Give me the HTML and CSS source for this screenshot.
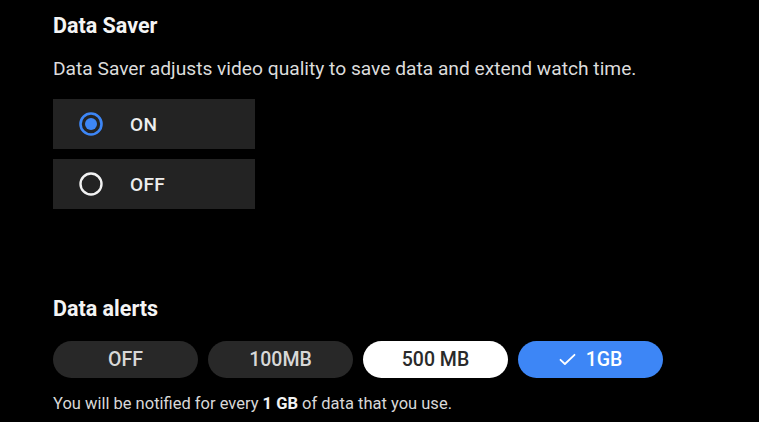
FILE: index.html
```html
<!DOCTYPE html>
<html lang="en">
<head>
<meta charset="utf-8">
<title>Data Saver</title>
<link rel="stylesheet" href="styles.css">
</head>
<body>
<main class="page">
  <section class="saver">
    <h2 class="title">Data Saver</h2>
    <p class="desc">Data Saver adjusts video quality to save data and extend watch time.</p>
    <div class="radios">
      <div class="radio-row">
        <svg class="radio" width="26" height="26" viewBox="0 0 26 26"><circle cx="13" cy="13" r="10.5" fill="none" stroke="#3d86f6" stroke-width="2.6"/><circle cx="13" cy="13" r="6" fill="#3d86f6"/></svg>
        <span class="radio-label">ON</span>
      </div>
      <div class="radio-row">
        <svg class="radio" width="26" height="26" viewBox="0 0 26 26"><circle cx="13" cy="13" r="10.5" fill="none" stroke="#f2f2f2" stroke-width="2.4"/></svg>
        <span class="radio-label">OFF</span>
      </div>
    </div>
  </section>
  <section class="alerts">
    <h2 class="title">Data alerts</h2>
    <div class="chips">
      <span class="chip">OFF</span>
      <span class="chip">100MB</span>
      <span class="chip chip-light">500 MB</span>
      <span class="chip chip-active"><svg class="check" width="17" height="13" viewBox="0 0 17 13"><path d="M1.5 6.8 L5.9 11 L15.5 1.8" fill="none" stroke="#fff" stroke-width="1.8" stroke-linecap="round" stroke-linejoin="round"/></svg>1GB</span>
    </div>
    <p class="note">You will be notified for every <b>1 GB</b> of data that you use.</p>
  </section>
</main>
</body>
</html>
```
FILE: styles.css
```css
html, body {
  margin: 0;
  padding: 0;
  background: #000;
}
body {
  font-family: Roboto, "Noto Sans", "Liberation Sans", sans-serif;
  color: #e6e6e6;
  width: 759px;
  height: 422px;
  overflow: hidden;
}
.page {
  padding: 13px 0 0 53px;
  display: flex;
  flex-direction: column;
}
.title {
  margin: 0;
  font-size: 21.5px;
  line-height: 26px;
  font-weight: 700;
  color: #f4f4f4;
}
.desc {
  margin: 17px 0 0;
  font-size: 19.2px;
  line-height: 26px;
  color: #dcdcdc;
}
.radios {
  margin-top: 17px;
  display: flex;
  flex-direction: column;
  gap: 10px;
}
.radio-row {
  width: 202px;
  height: 50px;
  background: #232323;
  display: flex;
  align-items: center;
  box-sizing: border-box;
  padding-left: 25px;
}
.radio {
  display: block;
  flex: none;
}
.radio-label {
  margin-left: 26px;
  font-size: 19px;
  font-weight: 500;
  letter-spacing: 0.3px;
  color: #eeeeee;
}
.alerts {
  margin-top: 87px;
}
.chips {
  margin-top: 19px;
  display: flex;
  gap: 10px;
}
.chip {
  width: 145px;
  height: 37px;
  border-radius: 19px;
  background: #282828;
  color: #d8d8d8;
  font-size: 19.5px;
  font-weight: 500;
  display: flex;
  align-items: center;
  justify-content: center;
}
.chip-light {
  background: #ffffff;
  color: #2a2a2a;
}
.chip-active {
  background: #3d86f6;
  color: #ffffff;
  gap: 10px;
}
.check {
  display: block;
}
.note {
  margin: 15px 0 0;
  font-size: 16.5px;
  line-height: 22px;
  color: #d8d8d8;
}
.note b {
  font-weight: 700;
  color: #f2f2f2;
}
```
